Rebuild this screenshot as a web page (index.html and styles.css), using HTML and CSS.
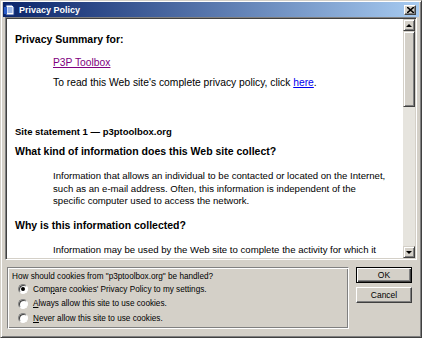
FILE: index.html
```html
<!DOCTYPE html>
<html>
<head>
    <title>Privacy Policy</title>
    <link rel="stylesheet" href="styles.css">
</head>
<body>
    <div class="dialog">
        <div class="titlebar">
            <svg class="title-icon" width="12" height="12" viewBox="0 0 12 12">
                <path d="M2 1h6l2 2v8H2z" fill="#fff" stroke="#1a3d8f" stroke-width="1"/>
                <path d="M3.5 4h5M3.5 6h5M3.5 8h5" stroke="#3a6fd0" stroke-width="1"/>
                <path d="M0 3h3v7H0z" fill="#2a5cc8"/>
            </svg>
            <span class="title">Privacy Policy</span>
            <div class="close-btn">
                <svg width="7" height="6" viewBox="0 0 7 6">
                    <path d="M0 0l7 6M7 0L0 6" stroke="#000" stroke-width="1.6"/>
                </svg>
            </div>
        </div>

        <div class="viewer">
            <div class="doc">
                <h1>Privacy Summary for:</h1>
                <p class="indent first"><a class="visited" href="#">P3P Toolbox</a></p>
                <p class="indent">To read this Web site's complete privacy policy, click <a href="#">here</a>.</p>
                <h2 class="statement">Site statement 1 &mdash; p3ptoolbox.org</h2>
                <h2 class="question-head">What kind of information does this Web site collect?</h2>
                <p class="indent para">Information that allows an individual to be contacted or located on the Internet, such as an e-mail address. Often, this information is independent of the specific computer used to access the network.</p>
                <h2 class="question-head why">Why is this information collected?</h2>
                <p class="indent para">Information may be used by the Web site to complete the activity for which it was provided, whether the activity is a one-time event or a recurring one.</p>
            </div>
            <div class="scrollbar">
                <div class="arrow"><span class="tri up"></span></div>
                <div class="thumb"></div>
                <div class="track"></div>
                <div class="arrow"><span class="tri down"></span></div>
            </div>
        </div>

        <div class="footer">
            <div class="group">
                <div class="prompt">How should cookies from "p3ptoolbox.org" be handled?</div>
                <div class="option"><span class="radio checked"></span>Com<u>p</u>are cookies' Privacy Policy to my settings.</div>
                <div class="option"><span class="radio"></span><u>A</u>lways allow this site to use cookies.</div>
                <div class="option"><span class="radio"></span><u>N</u>ever allow this site to use cookies.</div>
            </div>
            <div class="buttons">
                <div class="btn default">OK</div>
                <div class="btn">Cancel</div>
            </div>
        </div>
    </div>
</body>
</html>
```

FILE: styles.css
```css
body {
    margin: 0;
    background: #d4d0c8;
    font-family: "Liberation Sans", Arial, sans-serif;
}

.dialog {
    width: 422px;
    height: 338px;
    box-sizing: border-box;
    background: #d4d0c8;
    border: 1px solid;
    border-color: #d4d0c8 #404040 #404040 #d4d0c8;
    box-shadow: inset 1px 1px #fff, inset -1px -1px #808080;
    padding: 1px 2px 2px 2px;
    display: flex;
    flex-direction: column;
}

.titlebar {
    height: 15px;
    display: flex;
    align-items: center;
    padding: 0 3px 0 1px;
    background: linear-gradient(to right, #0a246a, #a6caf0);
}

.title-icon {
    margin-right: 3px;
}

.title {
    color: #fff;
    font-weight: bold;
    font-size: 9px;
    flex: 1;
}

.close-btn {
    width: 12px;
    height: 10px;
    box-sizing: border-box;
    background: #d4d0c8;
    border: 1px solid;
    border-color: #fff #404040 #404040 #fff;
    box-shadow: inset -1px -1px #808080;
    display: flex;
    align-items: center;
    justify-content: center;
}

.viewer {
    height: 243px;
    box-sizing: border-box;
    margin: 0 2px;
    border: 1px solid;
    border-color: #808080 #fff #fff #808080;
    box-shadow: inset 1px 1px #404040, inset -1px -1px #d4d0c8;
    padding: 1px;
    display: flex;
}

.doc {
    flex: 1;
    background: #fff;
    overflow: hidden;
    padding: 14px 8px 0 8px;
    color: #000;
}

.doc h1,
.doc h2,
.doc p {
    margin: 0;
    line-height: 12px;
}

.doc h1 {
    font-size: 10.5px;
}

.doc h2 {
    font-size: 10.5px;
}

.doc p {
    font-size: 10.3px;
    margin-top: 8px;
}

.doc .indent {
    margin-left: 38px;
}

.doc p.first {
    margin-top: 12px;
}

.doc h2.statement {
    font-size: 9.5px;
    margin-top: 37px;
}

.doc h2.question-head {
    margin-top: 7px;
}

.doc h2.why {
    margin-top: 11px;
}

.doc p.para {
    font-size: 9.6px;
    margin-top: 13px;
    margin-right: 7px;
    line-height: 12.5px;
}

a {
    color: #0000ee;
}

a.visited {
    color: #800080;
}

.scrollbar {
    width: 12px;
    display: flex;
    flex-direction: column;
}

.arrow,
.thumb {
    box-sizing: border-box;
    background: #d4d0c8;
    border: 1px solid;
    border-color: #d4d0c8 #404040 #404040 #d4d0c8;
    box-shadow: inset 1px 1px #fff, inset -1px -1px #808080;
}

.arrow {
    height: 12px;
    display: flex;
    align-items: center;
    justify-content: center;
}

.thumb {
    height: 76px;
}

.track {
    flex: 1;
    background: #e6e4de;
}

.tri {
    width: 0;
    height: 0;
    border-left: 3px solid transparent;
    border-right: 3px solid transparent;
}

.tri.up {
    border-bottom: 3px solid #000;
}

.tri.down {
    border-top: 3px solid #000;
}

.footer {
    display: flex;
    align-items: flex-start;
    margin-top: 7px;
    padding-left: 4px;
}

.group {
    width: 342px;
    height: 62px;
    box-sizing: border-box;
    border: 1px solid;
    border-color: #808080 #fff #fff #808080;
    box-shadow: inset 1px 1px #fff, inset -1px -1px #808080;
    padding: 3px 0 0 4px;
    font-size: 8.2px;
    color: #000;
}

.prompt {
    line-height: 11px;
}

.option {
    display: flex;
    align-items: center;
    height: 14.5px;
    padding-left: 6px;
}

.option:first-of-type {
    margin-top: 2px;
}

.radio {
    position: relative;
    width: 10px;
    height: 10px;
    box-sizing: border-box;
    border-radius: 50%;
    background: #fff;
    border: 1px solid;
    border-color: #808080 #fff #fff #808080;
    box-shadow: inset 1px 1px #404040;
    margin-right: 5px;
}

.radio.checked::after {
    content: "";
    position: absolute;
    left: 2px;
    top: 2px;
    width: 4px;
    height: 4px;
    border-radius: 50%;
    background: #000;
}

.buttons {
    display: flex;
    flex-direction: column;
    gap: 4px;
    margin-left: 7px;
}

.btn {
    width: 56px;
    height: 16px;
    box-sizing: border-box;
    background: #d4d0c8;
    border: 1px solid;
    border-color: #fff #404040 #404040 #fff;
    box-shadow: inset -1px -1px #808080;
    font-size: 8.5px;
    display: flex;
    align-items: center;
    justify-content: center;
    color: #000;
}

.btn.default {
    border-color: #000;
    box-shadow: inset 1px 1px #fff, inset -1px -1px #404040, inset -2px -2px #808080;
}
```
